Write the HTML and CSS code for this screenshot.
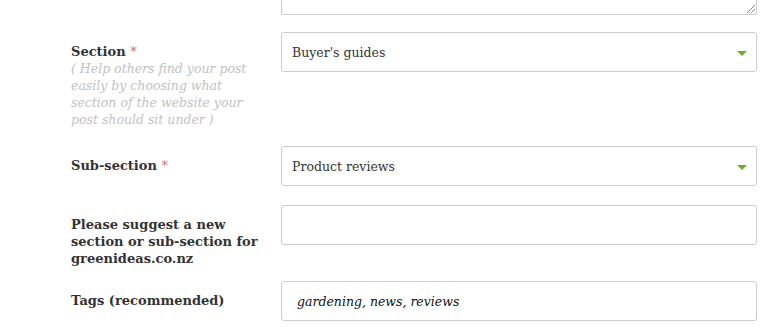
FILE: index.html
```html
<!DOCTYPE html>
<html lang="en">
<head>
<meta charset="utf-8">
<title>Post form</title>
<link rel="stylesheet" href="styles.css">
</head>
<body>
<form class="form">
  <div class="row row-top">
    <div class="label-col"></div>
    <div class="field-col">
      <div class="textarea"><span class="grip"></span></div>
    </div>
  </div>

  <div class="row row-section">
    <div class="label-col">
      <div class="label">Section <span class="req">*</span></div>
      <div class="help">( Help others find your post easily by choosing what section of the website your post should sit under )</div>
    </div>
    <div class="field-col">
      <div class="select">
        <span class="value">Buyer's guides</span>
        <span class="arrow"></span>
      </div>
    </div>
  </div>

  <div class="row">
    <div class="label-col">
      <div class="label">Sub-section <span class="req">*</span></div>
    </div>
    <div class="field-col">
      <div class="select">
        <span class="value">Product reviews</span>
        <span class="arrow"></span>
      </div>
    </div>
  </div>

  <div class="row row-suggest">
    <div class="label-col">
      <div class="label">Please suggest a new section or sub-section for greenideas.co.nz</div>
    </div>
    <div class="field-col">
      <div class="input"></div>
    </div>
  </div>

  <div class="row">
    <div class="label-col">
      <div class="label">Tags (recommended)</div>
    </div>
    <div class="field-col">
      <div class="input"><span class="tags">gardening, news, reviews</span></div>
    </div>
  </div>
</form>
</body>
</html>
```

FILE: styles.css
```css
html, body {
  margin: 0;
  padding: 0;
  background: #ffffff;
}

body {
  font-family: "DejaVu Serif", "Liberation Serif", serif;
  color: #333333;
}

.form {
  display: flex;
  flex-direction: column;
  padding-left: 71px;
  width: 686px;
}

.row {
  display: flex;
  gap: 10px;
  margin-bottom: 19px;
}

.row-top {
  margin-bottom: 17px;
}

.row-section {
  margin-bottom: 18px;
}

.row-suggest {
  margin-bottom: 14px;
}

.label-col {
  width: 200px;
  flex: none;
  padding-top: 11px;
}

.row-top .label-col {
  padding-top: 0;
}

.field-col {
  flex: 1;
}

.label {
  font-size: 13px;
  font-weight: bold;
  line-height: 17px;
  color: #333333;
}

.req {
  color: #d66a7a;
  font-weight: normal;
}

.help {
  font-size: 12.5px;
  font-style: italic;
  line-height: 17px;
  color: #c2c2c2;
}

.textarea {
  position: relative;
  height: 14px;
  border: 1px solid #cccccc;
  border-top: none;
  border-radius: 0 0 3px 3px;
  background: #fff;
}

.grip {
  position: absolute;
  right: 1px;
  bottom: 1px;
  width: 8px;
  height: 8px;
  background:
    linear-gradient(135deg, transparent 45%, #888 45%, #888 55%, transparent 55%, transparent 70%, #888 70%, #888 78%, transparent 78%);
}

.select, .input {
  position: relative;
  box-sizing: border-box;
  height: 40px;
  border: 1px solid #cccccc;
  border-radius: 3px;
  background: #ffffff;
  display: flex;
  align-items: center;
}

.value {
  padding-left: 10px;
  font-size: 12.5px;
  color: #333333;
}

.arrow {
  position: absolute;
  right: 9px;
  top: 18px;
  width: 0;
  height: 0;
  border-left: 5.5px solid transparent;
  border-right: 5.5px solid transparent;
  border-top: 5px solid #6aad2a;
}

.tags {
  padding-left: 15px;
  font-size: 12.5px;
  font-style: italic;
  color: #111111;
}
```
